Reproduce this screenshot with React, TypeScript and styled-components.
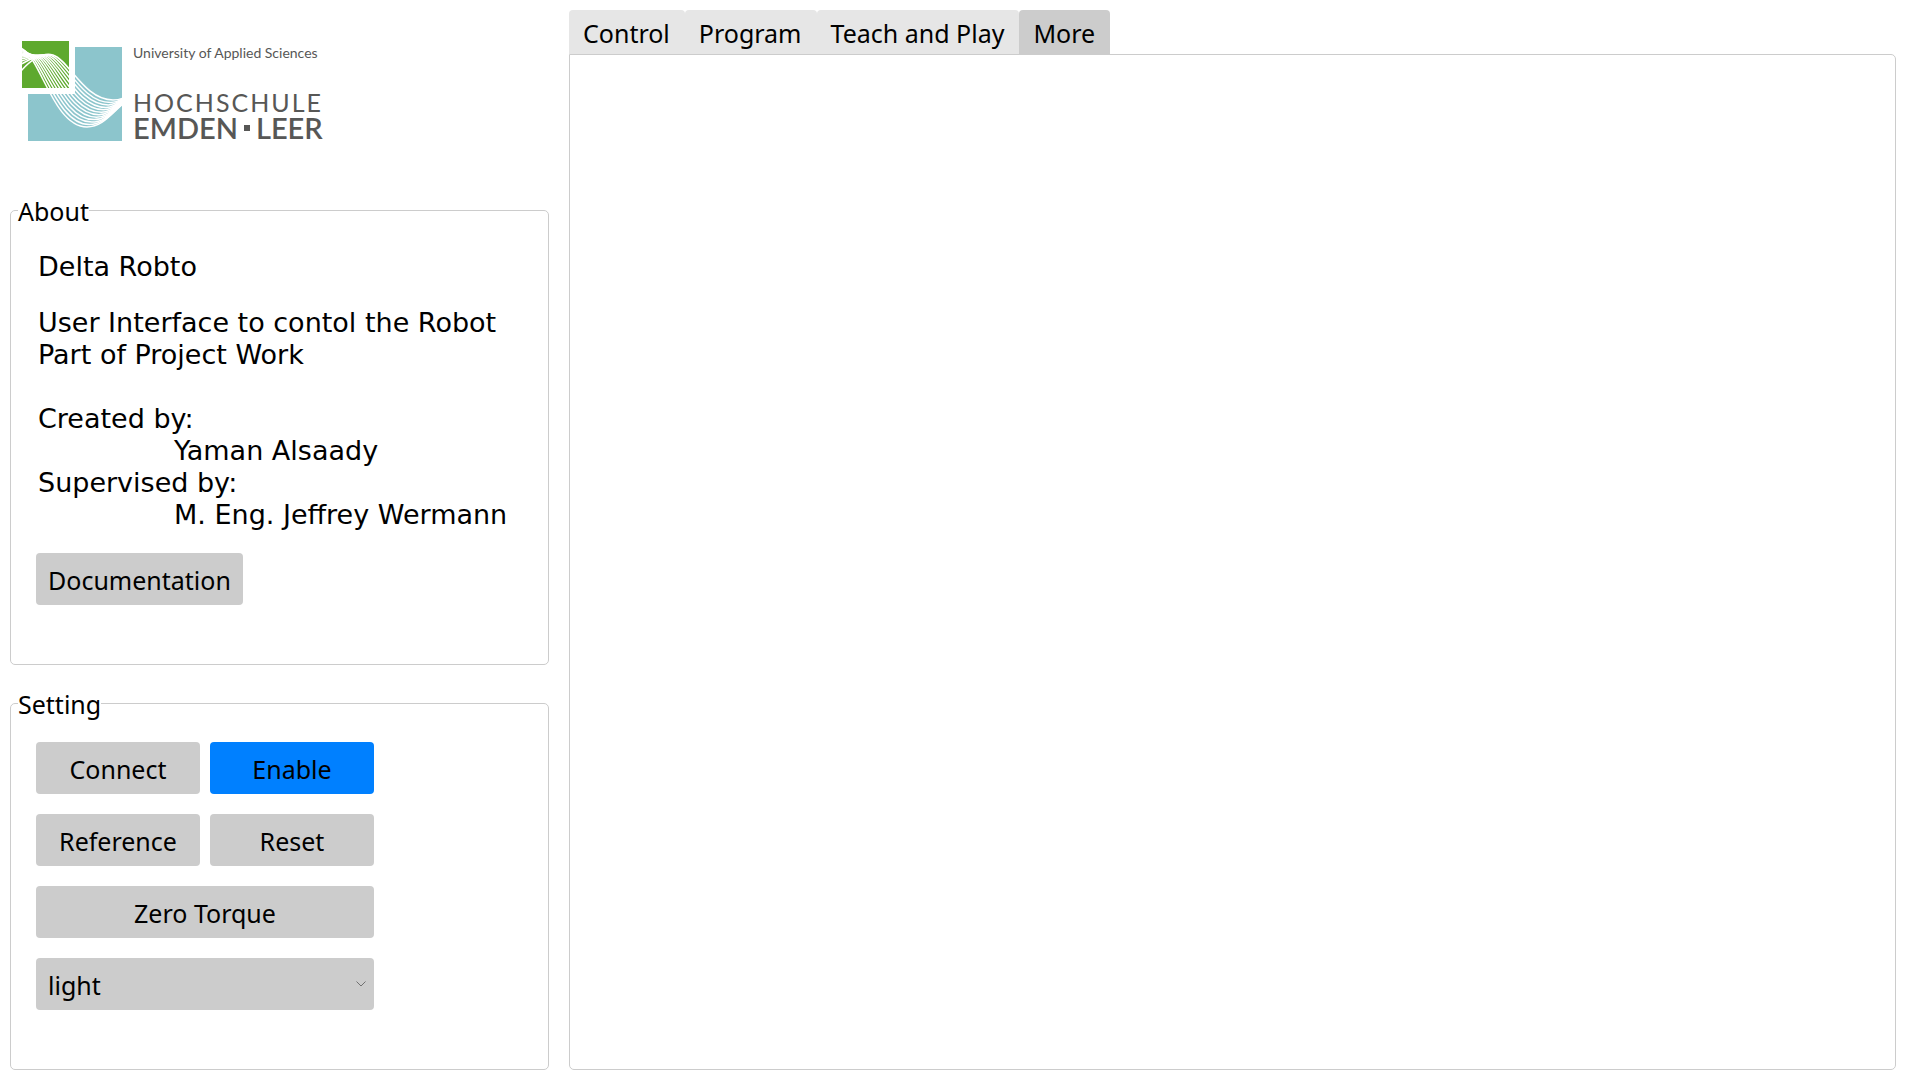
import React, { useState } from 'react';
import styled, { createGlobalStyle, css } from 'styled-components';

const GlobalStyle = createGlobalStyle`
  *, *::before, *::after { box-sizing: border-box; }
  body {
    margin: 0;
    background: #ffffff;
    color: #000000;
    font-family: "Noto Sans", "Open Sans", sans-serif;
    font-size: 25px;
  }
`;

const Page = styled.div`
  display: grid;
  grid-template-columns: 539px minmax(0, 1fr);
  column-gap: 20px;
  min-height: 100vh;
  padding: 10px 24px 10px 10px;
`;

const Sidebar = styled.aside`
  display: flex;
  flex-direction: column;
`;

const Brand = styled.header`
  display: flex;
  gap: 11px;
  padding: 31px 12px 55px;
`;

const Mark = styled.svg`
  width: 100px;
  height: 100px;
  flex: none;
`;

const Wordmark = styled.div`
  display: flex;
  flex-direction: column;
  color: #575756;
  font-family: Lato, "Noto Sans", sans-serif;
  white-space: nowrap;
`;

const Tagline = styled.span`
  margin-bottom: 24px;
  font-size: 14px;
  line-height: 24px;
`;

const BrandTop = styled.span`
  font-size: 25px;
  line-height: 26px;
  letter-spacing: 2px;
`;

const BrandBottom = styled.span`
  display: flex;
  align-items: center;
  gap: 6px;
  font-size: 29px;
  font-weight: 600;
  line-height: 26px;
`;

const Dot = styled.i`
  width: 6px;
  height: 6px;
  background: currentColor;
`;

const Group = styled.fieldset<{ $grow?: boolean }>`
  min-width: 0;
  margin: 0;
  padding: 0 7px;
  border: 1px solid #cccccc;
  border-radius: 5px;
  ${({ $grow }) => $grow && css`flex: 1;`}

  & + & { margin-top: 24px; }
`;

const GroupTitle = styled.legend`
  padding: 2px 0 0;
  line-height: 26px;
`;

const AboutBody = styled.div`
  padding: 27px 18px 59px;
`;

const AboutText = styled.div`
  padding-left: 2px;
  font-family: "DejaVu Sans", sans-serif;
  font-size: 27px;
  line-height: 32px;
`;

const Paragraph = styled.p`
  margin: 0 0 24px;
`;

const Credits = styled.dl`
  margin: 32px 0 22px;
`;

const Name = styled.dd`
  margin: 0 0 0 136px;
`;

const controlStyle = css`
  height: 52px;
  padding: 2px 12px 0;
  border: 0;
  border-radius: 4px;
  color: #000000;
  font-family: inherit;
  font-size: 25px;
  cursor: pointer;
`;

const Button = styled.button<{ $primary?: boolean; $wide?: boolean }>`
  ${controlStyle}
  display: block;
  background: ${({ $primary }) => ($primary ? '#0080ff' : '#cccccc')};
  ${({ $wide }) => $wide && css`grid-column: 1 / -1;`}
`;

const SettingBody = styled.div`
  display: grid;
  grid-template-columns: 164px 164px;
  gap: 20px 10px;
  padding: 25px 18px;
`;

const SelectWrap = styled.div`
  display: grid;
  grid-column: 1 / -1;
  align-items: center;
`;

const Select = styled.select`
  ${controlStyle}
  grid-area: 1 / 1;
  width: 100%;
  appearance: none;
  background: #cccccc;
`;

const Chevron = styled.svg`
  grid-area: 1 / 1;
  justify-self: end;
  width: 10px;
  height: 6px;
  margin-right: 8px;
  pointer-events: none;
`;

const Main = styled.main`
  display: flex;
  flex-direction: column;
`;

const TabList = styled.div`
  display: flex;
`;

const Tab = styled.button<{ $active: boolean }>`
  height: 44px;
  padding: 2px 15px 0 14px;
  border: 0;
  border-radius: 4px 4px 0 0;
  background: ${({ $active }) => ($active ? '#cccccc' : '#e6e6e6')};
  color: #000000;
  font-family: inherit;
  font-size: 25px;
  white-space: nowrap;
  cursor: pointer;
`;

const Panel = styled.section`
  flex: 1;
  border: 1px solid #cccccc;
  border-radius: 0 5px 5px 5px;
`;

const tabs = ['Control', 'Program', 'Teach and Play', 'More'];

const steps = Array.from({ length: 12 }, (_, i) => i / 11);
const mix = (a: number, b: number, t: number) => (a + (b - a) * t).toFixed(1);

// One strand of the wave bundle: t = 0 is the upper edge, t = 1 the lower one.
const strand = (t: number) =>
  `M-1 ${mix(30, 7, Math.sqrt(t))} C${mix(8, 3, t)} ${mix(20, 9, t)} ${mix(20, 7, t)} ${mix(11, 13, t)} ${mix(31, 11, t)} ${mix(14, 20, t)} ` +
  `C${mix(47, 24, t)} ${mix(19, 40, t)} ${mix(62, 38, t)} ${mix(59, 86, t)} ${mix(91, 65, t)} ${mix(59, 86, t)} ` +
  `C${mix(94, 80, t)} ${mix(59, 86, t)} ${mix(97, 88, t)} ${mix(59, 74, t)} 101 ${mix(57, 63, t)}`;

function LogoMark() {
  return (
    <Mark viewBox="0 0 100 100" aria-hidden="true">
      <path d="M53 6H100V100H6V53H53Z" fill="#8cc5cc" />
      <path d="M0 0H47V47H0Z" fill="#5ea92e" />
      <g fill="none" stroke="#ffffff" strokeWidth="1.5">
        {steps.map((t) => <path key={t} d={strand(t)} />)}
      </g>
    </Mark>
  );
}

export default function App() {
  const [active, setActive] = useState('More');
  const [theme, setTheme] = useState('light');

  return (
    <>
      <GlobalStyle />
      <Page>
        <Sidebar>
          <Brand>
            <LogoMark />
            <Wordmark>
              <Tagline>University of Applied Sciences</Tagline>
              <BrandTop>HOCHSCHULE</BrandTop>
              <BrandBottom>EMDEN<Dot />LEER</BrandBottom>
            </Wordmark>
          </Brand>

          <Group>
            <GroupTitle>About</GroupTitle>
            <AboutBody>
              <AboutText>
                <Paragraph>Delta Robto</Paragraph>
                <Paragraph>
                  User Interface to contol the Robot
                  <br />
                  Part of Project Work
                </Paragraph>
                <Credits>
                  <dt>Created by:</dt>
                  <Name>Yaman Alsaady</Name>
                  <dt>Supervised by:</dt>
                  <Name>M. Eng. Jeffrey Wermann</Name>
                </Credits>
              </AboutText>
              <Button type="button">Documentation</Button>
            </AboutBody>
          </Group>

          <Group $grow>
            <GroupTitle>Setting</GroupTitle>
            <SettingBody>
              <Button type="button">Connect</Button>
              <Button type="button" $primary>Enable</Button>
              <Button type="button">Reference</Button>
              <Button type="button">Reset</Button>
              <Button type="button" $wide>Zero Torque</Button>
              <SelectWrap>
                <Select aria-label="Theme" value={theme} onChange={(e) => setTheme(e.target.value)}>
                  <option value="light">light</option>
                  <option value="dark">dark</option>
                </Select>
                <Chevron viewBox="0 0 10 6" aria-hidden="true">
                  <path d="M0.5 0.5L5 5L9.5 0.5" fill="none" stroke="#707070" />
                </Chevron>
              </SelectWrap>
            </SettingBody>
          </Group>
        </Sidebar>

        <Main>
          <TabList role="tablist">
            {tabs.map((name) => (
              <Tab
                key={name}
                type="button"
                role="tab"
                aria-selected={active === name}
                $active={active === name}
                onClick={() => setActive(name)}
              >
                {name}
              </Tab>
            ))}
          </TabList>
          <Panel role="tabpanel" aria-label={active} />
        </Main>
      </Page>
    </>
  );
}
